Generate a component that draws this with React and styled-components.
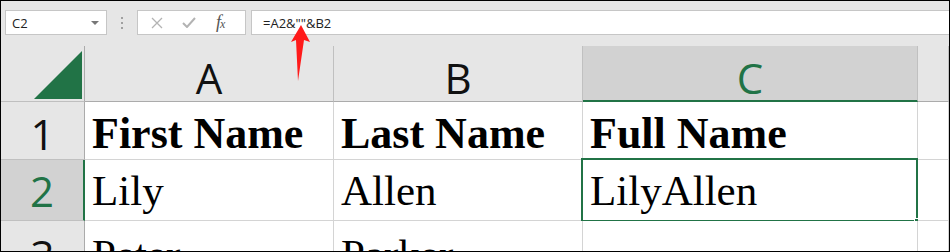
import styled, { createGlobalStyle } from "styled-components";

const GREEN = "#217346";

const GlobalStyle = createGlobalStyle`
  html, body {
    margin: 0;
    padding: 0;
    background: #ffffff;
  }
  * {
    box-sizing: border-box;
  }
`;

const Frame = styled.div`
  position: relative;
  width: 950px;
  height: 252px;
  border: 1px solid #000;
  background: #e6e6e6;
  overflow: hidden;
  display: flex;
  flex-direction: column;
`;

const Toolbar = styled.div`
  height: 45px;
  flex: none;
  display: flex;
  align-items: flex-start;
  padding: 9px 0 0 4px;
  font-family: "Open Sans", "Noto Sans", sans-serif;
`;

const NameBox = styled.div`
  width: 102px;
  height: 25px;
  background: #fff;
  border: 1px solid #c6c6c6;
  display: flex;
  align-items: center;
  justify-content: space-between;
  padding: 0 7px 0 6px;
  font-size: 13px;
  color: #222;
`;

const Caret = styled.span`
  width: 0;
  height: 0;
  border-left: 4px solid transparent;
  border-right: 4px solid transparent;
  border-top: 4px solid #777;
`;

const Grip = styled.div`
  width: 30px;
  height: 25px;
  display: flex;
  flex-direction: column;
  align-items: center;
  justify-content: center;
  gap: 3px;
`;

const GripDot = styled.span`
  width: 2px;
  height: 2px;
  background: #a0a0a0;
`;

const IconBox = styled.div`
  width: 109px;
  height: 25px;
  background: #fff;
  border: 1px solid #c6c6c6;
  display: flex;
  align-items: center;
  padding-left: 13px;
  gap: 19px;
`;

const Fx = styled.span`
  font-family: "Liberation Serif", serif;
  font-style: italic;
  font-size: 18px;
  line-height: 18px;
  color: #555;
  letter-spacing: -1px;
  margin-left: 1px;

  small {
    font-size: 12px;
  }
`;

const FormulaBox = styled.div`
  flex: 1;
  height: 25px;
  margin-left: 5px;
  background: #fff;
  border: 1px solid #c6c6c6;
  border-right: none;
  display: flex;
  align-items: center;
  padding-left: 11px;
  font-size: 13px;
  color: #222;
`;

const Sheet = styled.div`
  flex: 1;
  display: grid;
  grid-template-columns: 84px 249px 249px 335px 1fr;
  grid-template-rows: 56px 58px 61px 60px;
  overflow: hidden;
`;

const Corner = styled.div`
  background: #e6e6e6;
  border-right: 1px solid #ababab;
  border-bottom: 1px solid #bfbfbf;
  display: flex;
  align-items: flex-end;
  justify-content: flex-end;
  padding: 0 2px 2px 0;
`;

const ColHead = styled.div`
  background: ${(p) => (p.$active ? "#d2d2d2" : "#e6e6e6")};
  border-right: 1px solid #c0c0c0;
  border-bottom: ${(p) => (p.$active ? `2px solid ${GREEN}` : "1px solid #ababab")};
  color: ${(p) => (p.$active ? GREEN : "#111")};
  display: flex;
  align-items: flex-end;
  justify-content: center;
  padding-bottom: ${(p) => (p.$active ? "1px" : "2px")};
  font-family: "Open Sans", "Noto Sans", sans-serif;
  font-size: 42px;
  line-height: 42px;
`;

const RowHead = styled.div`
  background: ${(p) => (p.$active ? "#d2d2d2" : "#e6e6e6")};
  border-right: ${(p) => (p.$active ? `2px solid ${GREEN}` : "1px solid #ababab")};
  border-bottom: 1px solid #c0c0c0;
  color: ${(p) => (p.$active ? GREEN : "#111")};
  display: flex;
  align-items: flex-end;
  justify-content: center;
  padding-bottom: ${(p) => p.$pad}px;
  font-family: "Open Sans", "Noto Sans", sans-serif;
  font-size: 42px;
  line-height: 42px;
`;

const Cell = styled.div`
  position: relative;
  background: #fff;
  border-right: 1px solid #d4d4d4;
  border-bottom: 1px solid #d4d4d4;
  display: flex;
  align-items: flex-end;
  padding: 0 0 ${(p) => p.$pad}px 7px;
  font-family: "Liberation Serif", "Times New Roman", serif;
  font-weight: ${(p) => (p.$bold ? 700 : 400)};
  font-size: ${(p) => (p.$bold ? 44 : 43)}px;
  line-height: 43px;
  color: #000;
  white-space: nowrap;
`;

const Selection = styled.div`
  position: absolute;
  top: -2px;
  left: -2px;
  right: -1px;
  bottom: -2px;
  border: 2px solid ${GREEN};
  pointer-events: none;
`;

const Handle = styled.span`
  position: absolute;
  right: -4px;
  bottom: -4px;
  width: 6px;
  height: 6px;
  background: ${GREEN};
  border: 1px solid #fff;
`;

const Arrow = styled.svg`
  position: absolute;
  left: 0;
  top: 0;
  pointer-events: none;
`;

const columns = ["A", "B", "C"];
const rows = [
  { n: 1, pad: 4, bold: true, cells: ["First Name", "Last Name", "Full Name"] },
  { n: 2, pad: 8, cells: ["Lily", "Allen", "LilyAllen"] },
  { n: 3, pad: 4, cells: ["Peter", "Parker", ""] },
];

export default function App() {
  return (
    <>
      <GlobalStyle />
      <Frame>
        <Toolbar>
          <NameBox>
            <span>C2</span>
            <Caret />
          </NameBox>
          <Grip>
            <GripDot />
            <GripDot />
            <GripDot />
          </Grip>
          <IconBox>
            <svg width="12" height="12" viewBox="0 0 12 12">
              <path d="M1 1L11 11M11 1L1 11" stroke="#b3b3b3" strokeWidth="1.3" fill="none" />
            </svg>
            <svg width="14" height="11" viewBox="0 0 14 11">
              <path d="M1 6L5 10L13 1" stroke="#b3b3b3" strokeWidth="2" fill="none" />
            </svg>
            <Fx>
              f<small>x</small>
            </Fx>
          </IconBox>
          <FormulaBox>=A2&amp;""&amp;B2</FormulaBox>
        </Toolbar>

        <Sheet>
          <Corner>
            <svg width="48" height="48" viewBox="0 0 48 48">
              <polygon points="48,0 48,48 0,48" fill={GREEN} />
            </svg>
          </Corner>
          {columns.map((c) => (
            <ColHead key={c} $active={c === "C"}>
              {c}
            </ColHead>
          ))}
          <ColHead />

          {rows.map((row) => (
            <>
              <RowHead key={`h${row.n}`} $pad={row.pad} $active={row.n === 2}>
                {row.n}
              </RowHead>
              {row.cells.map((text, i) => (
                <Cell key={`${row.n}-${i}`} $pad={row.pad} $bold={row.bold}>
                  {text}
                  {row.n === 2 && i === 2 && (
                    <Selection>
                      <Handle />
                    </Selection>
                  )}
                </Cell>
              ))}
              <Cell key={`${row.n}-x`} $pad={row.pad} />
            </>
          ))}
        </Sheet>

        <Arrow width="948" height="250" viewBox="0 0 948 250">
          <polygon points="300,24 309,41 303,39 297,80 295,39 290,41" fill="#ff1a1a" />
        </Arrow>
      </Frame>
    </>
  );
}
